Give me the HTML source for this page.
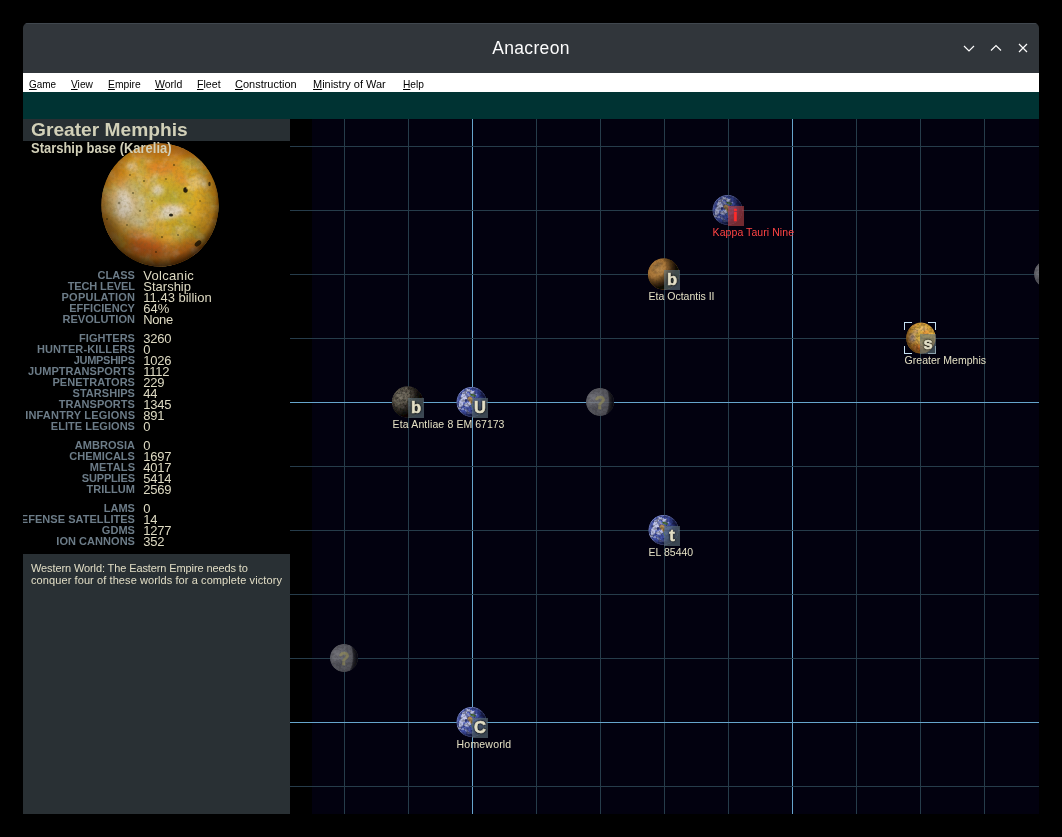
<!DOCTYPE html>
<html><head><meta charset="utf-8"><title>Anacreon</title><style>
*{box-sizing:border-box}
html,body{margin:0;padding:0;background:#000;}
body{width:1062px;height:837px;position:relative;overflow:hidden;font-family:"Liberation Sans",sans-serif;}
.abs{position:absolute}
#win{will-change:transform;position:absolute;left:23px;top:23px;width:1016px;height:791px;overflow:hidden;border-radius:5px 5px 0 0;background:#000}
#tb{position:absolute;left:0;top:0;width:1016px;height:50px;background:#31363b;border-top:1px solid #40474e}
#title{position:absolute;left:0;top:12px;width:1016px;text-align:center;color:#fcfcfc;font-size:17.5px;letter-spacing:.35px;line-height:24px}
#menu{position:absolute;left:0;top:50px;width:1016px;height:19px;background:#fff;color:#000;font-size:10.5px;line-height:19px}
#menu span{position:absolute;top:2px;white-space:nowrap;transform-origin:0 0}
#menu u{text-decoration:underline;text-underline-offset:1px}
#teal{position:absolute;left:0;top:69px;width:1016px;height:27px;background:#003333}
#left{position:absolute;left:0;top:96px;width:267px;height:695px;background:#000;overflow:hidden}
#hd{position:absolute;left:0;top:0;width:267px;height:22px;background:#282f33}
#hd div{position:absolute;left:7.9px;transform-origin:0 50%;transform:scaleX(1.043);top:0px;font-weight:bold;font-size:18.4px;line-height:22px;color:#d2d0b8;white-space:nowrap}
#sub{position:absolute;left:8px;top:22.1px;transform-origin:0 50%;transform:scaleX(.94);font-weight:bold;font-size:13.8px;line-height:15px;color:#d2d0b8;white-space:nowrap;z-index:3}
.lb{position:absolute;right:155px;letter-spacing:.04px;font-weight:bold;font-size:11px;line-height:11px;color:#6c7c88;white-space:nowrap;text-align:right}
.vl{position:absolute;left:120.3px;font-size:13px;line-height:14px;height:14px;overflow:hidden;color:#dedac2;white-space:nowrap}
#msg{position:absolute;left:0;top:435px;width:267px;height:260px;background:#293034;color:#e0dcc4;font-size:11px;line-height:12px;letter-spacing:.09px}
#msg div{position:absolute;left:8px;top:8px;white-space:nowrap}
#map{position:absolute;left:267px;top:96px;width:749px;height:695px;background:#000;overflow:hidden}
#sky{position:absolute;left:22px;top:0;width:727px;height:695px;background:#02010f}
.pl{position:absolute;white-space:nowrap;font-size:10.5px;line-height:12px;color:#e4e0c4}
.bd{position:absolute;width:16px;height:20px;background:rgba(99,119,127,.6);color:#e3dfc6;font-weight:bold;font-size:16.5px;line-height:18.6px;text-align:center;-webkit-text-stroke:.55px #e3dfc6;text-shadow:0 0 1px #000,0 0 2px #000,0 0 3px rgba(0,0,0,.85)}
.bd.en{background:rgba(190,70,70,.6);color:#ff2a2a;-webkit-text-stroke:.55px #ff2a2a;text-shadow:none}
</style></head><body>
<svg width="0" height="0" style="position:absolute"><defs><radialGradient id="shS" cx=".30" cy=".36" r=".78"><stop offset="0" stop-color="#000" stop-opacity="0"/><stop offset=".55" stop-color="#000008" stop-opacity="0"/><stop offset=".8" stop-color="#000008" stop-opacity=".62"/><stop offset="1" stop-color="#000008" stop-opacity=".97"/></radialGradient><filter id="b1" x="-30%" y="-30%" width="160%" height="160%"><feGaussianBlur stdDeviation=".8"/></filter><filter id="b05" x="-30%" y="-30%" width="160%" height="160%"><feGaussianBlur stdDeviation=".45"/></filter><filter id="b2" x="-30%" y="-30%" width="160%" height="160%"><feGaussianBlur stdDeviation="2"/></filter><filter id="b4" x="-30%" y="-30%" width="160%" height="160%"><feGaussianBlur stdDeviation="4"/></filter><filter id="b7" x="-30%" y="-30%" width="160%" height="160%"><feGaussianBlur stdDeviation="7"/></filter><filter id="edge" x="-10%" y="-10%" width="120%" height="120%"><feGaussianBlur stdDeviation=".5"/></filter><filter id="grain" x="0" y="0" width="100%" height="100%"><feTurbulence type="fractalNoise" baseFrequency=".42" numOctaves="2" seed="5"/><feColorMatrix type="matrix" values="0 0 0 0 0  0 0 0 0 0  0 0 0 0 0  3.2 0 0 0 -1.25"/></filter><filter id="grainL" x="0" y="0" width="100%" height="100%"><feTurbulence type="fractalNoise" baseFrequency=".38" numOctaves="2" seed="11"/><feColorMatrix type="matrix" values="0 0 0 0 1  0 0 0 0 .96  0 0 0 0 .86  0 3.0 0 0 -1.45"/></filter><filter id="cloud" x="-20%" y="-20%" width="140%" height="140%"><feGaussianBlur in="SourceGraphic" stdDeviation=".55" result="b"/><feTurbulence type="fractalNoise" baseFrequency=".22" numOctaves="2" seed="9" result="n"/><feDisplacementMap in="b" in2="n" scale="5" xChannelSelector="R" yChannelSelector="G"/><feGaussianBlur stdDeviation=".35"/></filter><clipPath id="c157"><circle cx="0" cy="0" r="15.7"/></clipPath><clipPath id="c15"><circle cx="0" cy="0" r="14.95"/></clipPath><clipPath id="c14"><circle cx="0" cy="0" r="14"/></clipPath><radialGradient id="gE" cx=".34" cy=".42" r=".66"><stop offset="0" stop-color="#6c7ac6"/><stop offset=".5" stop-color="#4656ac"/><stop offset="1" stop-color="#2c3890"/></radialGradient><radialGradient id="shE" cx=".26" cy=".36" r=".84"><stop offset="0" stop-color="#000" stop-opacity="0"/><stop offset=".52" stop-color="#000010" stop-opacity="0"/><stop offset=".74" stop-color="#000010" stop-opacity=".55"/><stop offset=".9" stop-color="#000010" stop-opacity=".9"/><stop offset="1" stop-color="#000010" stop-opacity=".98"/></radialGradient><g id="earth"><g filter="url(#edge)"><g clip-path="url(#c15)"><circle r="15.4" fill="url(#gE)"/><circle r="14.7" fill="none" stroke="#a8b4ea" stroke-width="1.2" opacity=".55" filter="url(#b05)"/><g filter="url(#cloud)" fill="#f0f0fc" opacity=".74"><ellipse cx="-8" cy="-4" rx="3.4" ry="3.6" opacity=".9"/><ellipse cx="-6" cy="-9.5" rx="4.5" ry="1.6" opacity=".75" transform="rotate(-28 -6 -9.5)"/><ellipse cx="-10.5" cy="1.5" rx="2.2" ry="3.2" opacity=".85"/><ellipse cx="-4.5" cy="2.5" rx="3.2" ry="2.2" opacity=".85"/><ellipse cx="0" cy="-10.5" rx="3.4" ry="1.5" opacity=".9"/><ellipse cx="-12" cy="5.5" rx="2.4" ry="1.1" opacity=".9" transform="rotate(32 -12 5.5)"/><ellipse cx="-6" cy="8" rx="4.5" ry="1.1" opacity=".5" transform="rotate(22 -6 8)"/><ellipse cx="-2" cy="11" rx="4" ry="1" opacity=".35" transform="rotate(12 -2 11)"/><ellipse cx="4.5" cy="-7.5" rx="2.4" ry="1.1" opacity=".6"/><ellipse cx="-3" cy="-6.5" rx="1.6" ry="1.2" opacity=".8"/></g><g filter="url(#b05)"><path d="M-3.6 -4.8 C-1.6 -6 .6 -5.4 1.2 -3.4 C1.6 -1.2 1.4 1 .4 2.6 C-.6 1.2 -2 -.6 -3.2 -1.6 C-4.4 -2.8 -4.4 -4 -3.6 -4.8Z" fill="#b08c58"/><path d="M-1.4 -8 C.8 -9 3.6 -7.8 4.8 -5.8 C3.2 -4.8 1.4 -5.4 0 -6 C-1 -6.6 -1.8 -7.2 -1.4 -8Z" fill="#4e7242"/><path d="M.4 2 C1.6 3.2 1.9 4.8 1.3 6.2 C.2 5.2 -.6 3.6 .4 2Z" fill="#587c46"/><ellipse cx="-5.6" cy="-1.6" rx="1.1" ry="1.3" fill="#202a78" opacity=".85"/><ellipse cx="-7.6" cy="4.6" rx="1.2" ry=".8" fill="#2a348a" opacity=".7"/></g><rect x="-16" y="-16" width="32" height="32" filter="url(#grain)" opacity=".35"/><circle r="15.4" fill="url(#shE)"/></g></g></g><radialGradient id="gM" cx=".36" cy=".38" r=".66"><stop offset="0" stop-color="#b48448"/><stop offset=".62" stop-color="#a47032"/><stop offset=".86" stop-color="#c88226"/><stop offset="1" stop-color="#e89c28"/></radialGradient><radialGradient id="shM" cx=".24" cy=".28" r=".86"><stop offset="0" stop-color="#000" stop-opacity="0"/><stop offset=".36" stop-color="#000" stop-opacity="0"/><stop offset=".6" stop-color="#040200" stop-opacity=".6"/><stop offset=".76" stop-color="#040200" stop-opacity=".93"/><stop offset="1" stop-color="#040200" stop-opacity=".99"/></radialGradient><g id="mars"><g filter="url(#edge)"><g clip-path="url(#c157)"><circle r="15.9" fill="url(#gM)"/><g filter="url(#b1)"><ellipse cx="-6" cy="-8.5" rx="5.5" ry="1.2" fill="#6a5638" opacity=".7" transform="rotate(-30 -6 -8.5)"/><ellipse cx="-8.5" cy="-3" rx="3" ry=".9" fill="#74542c" opacity=".6" transform="rotate(38 -8.5 -3)"/><ellipse cx="-2" cy="3.5" rx="4" ry="2.5" fill="#86602e" opacity=".5"/><ellipse cx="-4" cy="-3.5" rx="4" ry="3" fill="#c49456" opacity=".35"/></g><rect x="-16" y="-16" width="32" height="32" filter="url(#grain)" opacity=".12"/><circle r="15.9" fill="url(#shM)"/></g></g></g><radialGradient id="gQ" cx=".34" cy=".34" r=".68"><stop offset="0" stop-color="#6a6458"/><stop offset=".6" stop-color="#534d43"/><stop offset="1" stop-color="#433d33"/></radialGradient><g id="merc"><g filter="url(#edge)"><g clip-path="url(#c157)"><circle r="15.9" fill="url(#gQ)"/><g filter="url(#b1)"><ellipse cx="-6" cy="-6" rx="4" ry="3" fill="#8a8476" opacity=".4"/><ellipse cx="-3" cy="3" rx="4" ry="2.5" fill="#3e3830" opacity=".5"/><ellipse cx="-9" cy="3" rx="2.5" ry="3" fill="#6a6458" opacity=".5"/></g><rect x="-16" y="-16" width="32" height="32" filter="url(#grain)" opacity=".4"/><rect x="-16" y="-16" width="32" height="32" filter="url(#grainL)" opacity=".16"/><circle r="15.9" fill="url(#shM)"/></g></g></g><radialGradient id="gU" cx=".34" cy=".40" r=".66"><stop offset="0" stop-color="#7a7a80"/><stop offset=".6" stop-color="#626268"/><stop offset="1" stop-color="#54545a"/></radialGradient><radialGradient id="shU" cx="-.35" cy=".46" r="1.32"><stop offset="0" stop-color="#000" stop-opacity="0"/><stop offset=".865" stop-color="#000" stop-opacity="0"/><stop offset=".905" stop-color="#06060a" stop-opacity=".62"/><stop offset=".96" stop-color="#06060a" stop-opacity=".8"/><stop offset="1" stop-color="#06060a" stop-opacity=".92"/></radialGradient><g id="unk"><g filter="url(#edge)" opacity=".9"><g clip-path="url(#c14)"><circle r="14.2" fill="url(#gU)"/><g filter="url(#b1)"><ellipse cx="-7" cy="-5" rx="4" ry="3" fill="#8c8c92" opacity=".4"/><ellipse cx="-5" cy="6" rx="5" ry="2.5" fill="#48484e" opacity=".5"/><ellipse cx="-9.5" cy="0" rx="2" ry="3" fill="#84848a" opacity=".4"/></g><rect x="-15" y="-15" width="30" height="30" filter="url(#grain)" opacity=".12"/><circle r="14.2" fill="url(#shU)"/></g></g><text x="0" y="6.6" text-anchor="middle" font-family="Liberation Sans, sans-serif" font-weight="bold" font-size="17.5" fill="#aaa052" stroke="#aaa052" stroke-width=".5" opacity=".45">?</text></g><radialGradient id="gI" cx=".50" cy=".46" r=".56"><stop offset="0" stop-color="#dabb40"/><stop offset=".5" stop-color="#d8ae36"/><stop offset=".8" stop-color="#d09428"/><stop offset="1" stop-color="#a86418"/></radialGradient><radialGradient id="shI" cx=".47" cy=".43" r=".58"><stop offset="0" stop-color="#000" stop-opacity="0"/><stop offset=".62" stop-color="#000" stop-opacity="0"/><stop offset=".86" stop-color="#2a1400" stop-opacity=".3"/><stop offset="1" stop-color="#1a0c00" stop-opacity=".86"/></radialGradient><linearGradient id="shI2" x1="0" y1="1" x2=".75" y2=".2"><stop offset="0" stop-color="#140a00" stop-opacity=".62"/><stop offset=".22" stop-color="#140a00" stop-opacity=".34"/><stop offset=".5" stop-color="#140a00" stop-opacity=".1"/><stop offset="1" stop-color="#140a00" stop-opacity=".04"/></linearGradient><clipPath id="cIo"><ellipse cx="0" cy="0" rx="58.6" ry="61.4"/></clipPath><filter id="edgeB" x="-5%" y="-5%" width="110%" height="110%" color-interpolation-filters="sRGB"><feGaussianBlur stdDeviation=".45"/><feColorMatrix type="saturate" values="1.12"/></filter><filter id="noise" x="0" y="0" width="100%" height="100%"><feTurbulence type="fractalNoise" baseFrequency=".05" numOctaves="4" seed="7"/><feColorMatrix type="matrix" values="0 0 0 0 .90  0 0 0 0 .46  0 0 0 0 .14  2.6 0 0 0 -1.1"/></filter><filter id="noise2" x="0" y="0" width="100%" height="100%"><feTurbulence type="fractalNoise" baseFrequency=".07" numOctaves="4" seed="23"/><feColorMatrix type="matrix" values="0 0 0 0 .96  0 0 0 0 .93  0 0 0 0 .88  0 3.4 0 0 -1.75"/></filter><filter id="noise3" x="0" y="0" width="100%" height="100%"><feTurbulence type="fractalNoise" baseFrequency=".085" numOctaves="3" seed="41"/><feColorMatrix type="matrix" values="0 0 0 0 .52  0 0 0 0 .52  0 0 0 0 .14  0 0 3.2 0 -1.4"/></filter><filter id="noise4" x="0" y="0" width="100%" height="100%"><feTurbulence type="fractalNoise" baseFrequency=".32" numOctaves="2" seed="3"/><feColorMatrix type="matrix" values="0 0 0 0 .25  0 0 0 0 .18  0 0 0 0 .05  3.4 0 0 0 -1.5"/></filter><g id="io"><g filter="url(#edgeB)"><g clip-path="url(#cIo)"><ellipse rx="59" ry="62" fill="url(#gI)"/><rect x="-60" y="-63" width="120" height="126" filter="url(#noise3)" opacity=".6"/><rect x="-60" y="-63" width="120" height="126" filter="url(#noise)" opacity=".5"/><g filter="url(#b4)"><ellipse cx="-14" cy="42" rx="18" ry="10" fill="#d8602a" opacity=".75"/><ellipse cx="-26" cy="30" rx="9" ry="6" fill="#dc6c2c" opacity=".55"/><ellipse cx="30" cy="44" rx="12" ry="6" fill="#e0702a" opacity=".6"/><ellipse cx="8" cy="49" rx="22" ry="8" fill="#dc6c2c" opacity=".55"/><ellipse cx="2" cy="-38" rx="17" ry="7" fill="#e07428" opacity=".65"/><ellipse cx="22" cy="-27" rx="7" ry="6" fill="#e07a30" opacity=".6"/><ellipse cx="-40" cy="-26" rx="7" ry="10" fill="#dc8428" opacity=".6"/><ellipse cx="46" cy="12" rx="8" ry="22" fill="#e2a42e" opacity=".6"/><ellipse cx="12" cy="-10" rx="16" ry="9" fill="#b8ac3c" opacity=".6"/><ellipse cx="26" cy="22" rx="14" ry="9" fill="#b4a83a" opacity=".55"/><ellipse cx="-24" cy="-18" rx="9" ry="7" fill="#c0ae40" opacity=".5"/><ellipse cx="-48" cy="24" rx="6" ry="12" fill="#b47c2c" opacity=".5"/></g><g filter="url(#b7)"><ellipse cx="-34" cy="-1" rx="19" ry="22" fill="#dcd4c6" opacity=".62"/><ellipse cx="-18" cy="12" rx="14" ry="10" fill="#dcd6c0" opacity=".4"/><ellipse cx="38" cy="-2" rx="13" ry="28" fill="#e4b630" opacity=".5"/></g><g filter="url(#b2)" fill="#f0e8e0"><ellipse cx="-35" cy="2" rx="8" ry="9" opacity=".6"/><ellipse cx="-38" cy="-8" rx="5" ry="4" opacity=".5"/><ellipse cx="-2" cy="-15" rx="6" ry="5.5" opacity=".75"/><ellipse cx="12" cy="6" rx="11" ry="6.5" opacity=".85"/><ellipse cx="2" cy="12" rx="6" ry="4" opacity=".6"/><ellipse cx="-22" cy="18" rx="8" ry="4" opacity=".45"/><ellipse cx="-30" cy="-39" rx="3.5" ry="3.5" opacity=".8"/><ellipse cx="-12" cy="-44" rx="4" ry="2" opacity=".45"/><ellipse cx="44" cy="-22" rx="3" ry="8" opacity=".5" transform="rotate(-22 44 -22)"/><ellipse cx="-14" cy="30" rx="5" ry="2.5" opacity=".4"/></g><rect x="-60" y="-63" width="120" height="126" filter="url(#noise2)" opacity=".32"/><rect x="-60" y="-63" width="120" height="126" filter="url(#noise4)" opacity=".22"/><g filter="url(#b4)"><ellipse cx="6" cy="-56" rx="36" ry="10" fill="#b06a14" opacity=".85"/><ellipse cx="-44" cy="-36" rx="7" ry="16" fill="#b87418" opacity=".5" transform="rotate(38 -44 -36)"/><ellipse cx="-50" cy="30" rx="7" ry="20" fill="#9c6418" opacity=".45" transform="rotate(-20 -50 30)"/></g><g filter="url(#b05)" fill="#1a1408"><ellipse cx="25.5" cy="-15" rx="2.2" ry="2.8" opacity=".95"/><ellipse cx="11" cy="10" rx="2" ry="1.6" opacity=".9"/><ellipse cx="38" cy="38.5" rx="3.8" ry="2.3" opacity=".9" transform="rotate(-38 38 38.5)"/><ellipse cx="49.5" cy="-21" rx="1.2" ry="2.2" opacity=".75"/><circle cx="-27" cy="-12" r="1.1" opacity=".45"/><circle cx="-41" cy="-2" r="1.3" opacity=".35"/><circle cx="-16" cy="-24" r="1" opacity=".5"/><circle cx="14" cy="-40" r="1" opacity=".5"/><circle cx="2" cy="32" r="1" opacity=".5"/><circle cx="-4" cy="47" r="1.1" opacity=".5"/><circle cx="30" cy="8" r="1.3" opacity=".35"/><circle cx="-53" cy="14" r="1" opacity=".5"/><circle cx="-20" cy="6" r=".9" opacity=".45"/><circle cx="35" cy="22" r="1" opacity=".4"/><circle cx="-33" cy="20" r="1" opacity=".4"/><circle cx="18" cy="30" r="1" opacity=".45"/><circle cx="-8" cy="-4" r=".9" opacity=".4"/><circle cx="40" cy="-4" r="1" opacity=".4"/><circle cx="-30" cy="-30" r="1" opacity=".4"/><circle cx="6" cy="-26" r="1" opacity=".4"/></g><ellipse cx="28.5" cy="-17.5" rx="2.4" ry="1.6" fill="#f0d070" opacity=".85" filter="url(#b05)" transform="rotate(-30 28.5 -17.5)"/><ellipse rx="59" ry="62" fill="url(#shI)"/><ellipse rx="59" ry="62" fill="url(#shI2)"/></g></g></g><radialGradient id="gIs" cx=".58" cy=".36" r=".66"><stop offset="0" stop-color="#dcb444"/><stop offset=".55" stop-color="#cc9a34"/><stop offset=".88" stop-color="#d48826"/><stop offset="1" stop-color="#e08a1c"/></radialGradient><radialGradient id="shIs" cx=".72" cy=".30" r=".92"><stop offset="0" stop-color="#000" stop-opacity="0"/><stop offset=".48" stop-color="#000" stop-opacity="0"/><stop offset=".75" stop-color="#14100c" stop-opacity=".42"/><stop offset="1" stop-color="#0a0806" stop-opacity=".8"/></radialGradient><filter id="grainO" x="0" y="0" width="100%" height="100%"><feTurbulence type="fractalNoise" baseFrequency=".3" numOctaves="2" seed="17"/><feColorMatrix type="matrix" values="0 0 0 0 .92  0 0 0 0 .42  0 0 0 0 .1  0 3.2 0 0 -1.3"/></filter><clipPath id="cIs"><ellipse cx="0" cy="0" rx="14.7" ry="15.5"/></clipPath><g id="ios"><g filter="url(#edge)"><g clip-path="url(#cIs)"><ellipse rx="15" ry="15.8" fill="url(#gIs)"/><g filter="url(#b1)"><ellipse cx="-8.5" cy="0" rx="3.2" ry="5" fill="#a898a0" opacity=".75"/><ellipse cx="-5" cy="-7" rx="2.5" ry="2" fill="#b8a8b0" opacity=".6"/><ellipse cx="2" cy="-9.5" rx="4" ry="1.8" fill="#f4dca8" opacity=".7"/><ellipse cx="-3" cy="9.5" rx="5" ry="3" fill="#d86c28" opacity=".75"/><ellipse cx="5" cy="-5.5" rx="3.5" ry="2.2" fill="#ec8c28" opacity=".7"/><ellipse cx="-2.5" cy="-1.5" rx="3" ry="3" fill="#b8a83c" opacity=".6"/><ellipse cx="10" cy="-3.5" rx="3" ry="3" fill="#f4c040" opacity=".7"/><ellipse cx="-1" cy="3.5" rx="2.5" ry="2" fill="#e8d090" opacity=".5"/></g><rect x="-16" y="-16" width="32" height="32" filter="url(#grainO)" opacity=".5"/><rect x="-16" y="-16" width="32" height="32" filter="url(#grain)" opacity=".25"/><ellipse rx="15" ry="15.8" fill="url(#shIs)"/></g></g></g></defs></svg>
<div id="win">
<div id="tb"><div id="title">Anacreon</div>
<svg class="abs" style="left:0;top:-1px" width="1016" height="50" viewBox="23 23 1016 50" fill="none" stroke="#fcfcfc" stroke-width="1.2"><path d="M964 46 L969 51 L974 46"/><path d="M991 50.5 L996 45.5 L1001 50.5"/><path d="M1019 44 L1027 52 M1027 44 L1019 52"/></svg>
</div>
<div id="menu">
<span style="left:5.5px;transform:scaleX(0.946)"><u>G</u>ame</span>
<span style="left:47.6px;transform:scaleX(0.970)"><u>V</u>iew</span>
<span style="left:84.5px;transform:scaleX(0.980)"><u>E</u>mpire</span>
<span style="left:132.0px;transform:scaleX(1.000)"><u>W</u>orld</span>
<span style="left:173.5px;transform:scaleX(1.010)"><u>F</u>leet</span>
<span style="left:212.3px;transform:scaleX(1.046)"><u>C</u>onstruction</span>
<span style="left:290.4px;transform:scaleX(1.045)"><u>M</u>inistry of War</span>
<span style="left:379.5px;transform:scaleX(0.970)"><u>H</u>elp</span>
</div>
<div id="teal"></div>
<div id="left">
<div id="hd"><div>Greater Memphis</div></div>
<svg class="abs" style="left:75px;top:22px;z-index:1" width="124" height="128" viewBox="-62 -64 124 128"><use href="#io"/></svg>
<div id="sub">Starship base (Karelia)</div>
<div class="lb" style="top:151px">CLASS</div><div class="vl" style="top:150px;letter-spacing:.3px">Volcanic</div>
<div class="lb" style="top:162px;letter-spacing:-0.13px;margin-right:0.13px">TECH LEVEL</div><div class="vl" style="top:161px">Starship</div>
<div class="lb" style="top:173px;letter-spacing:0.24px;margin-right:-0.24px">POPULATION</div><div class="vl" style="top:172px">11.43 billion</div>
<div class="lb" style="top:184px">EFFICIENCY</div><div class="vl" style="top:183px">64%</div>
<div class="lb" style="top:195px">REVOLUTION</div><div class="vl" style="top:194px;letter-spacing:-.4px">None</div>
<div class="lb" style="top:214px">FIGHTERS</div><div class="vl" style="top:213px;letter-spacing:-.23px">3260</div>
<div class="lb" style="top:225px;letter-spacing:0.12px;margin-right:-0.12px">HUNTER-KILLERS</div><div class="vl" style="top:224px;letter-spacing:-.23px">0</div>
<div class="lb" style="top:236px;letter-spacing:-0.28px;margin-right:0.28px">JUMPSHIPS</div><div class="vl" style="top:235px;letter-spacing:-.23px">1026</div>
<div class="lb" style="top:247px">JUMPTRANSPORTS</div><div class="vl" style="top:246px;letter-spacing:-.23px">1112</div>
<div class="lb" style="top:258px">PENETRATORS</div><div class="vl" style="top:257px;letter-spacing:-.23px">229</div>
<div class="lb" style="top:269px">STARSHIPS</div><div class="vl" style="top:268px;letter-spacing:-.23px">44</div>
<div class="lb" style="top:280px">TRANSPORTS</div><div class="vl" style="top:279px;letter-spacing:-.23px">1345</div>
<div class="lb" style="top:291px;letter-spacing:0.19px;margin-right:-0.19px">INFANTRY LEGIONS</div><div class="vl" style="top:290px;letter-spacing:-.23px">891</div>
<div class="lb" style="top:302px">ELITE LEGIONS</div><div class="vl" style="top:301px;letter-spacing:-.23px">0</div>
<div class="lb" style="top:321px">AMBROSIA</div><div class="vl" style="top:320px;letter-spacing:-.23px">0</div>
<div class="lb" style="top:332px">CHEMICALS</div><div class="vl" style="top:331px;letter-spacing:-.23px">1697</div>
<div class="lb" style="top:343px;letter-spacing:0.16px;margin-right:-0.16px">METALS</div><div class="vl" style="top:342px;letter-spacing:-.23px">4017</div>
<div class="lb" style="top:354px;letter-spacing:-0.17px;margin-right:0.17px">SUPPLIES</div><div class="vl" style="top:353px;letter-spacing:-.23px">5414</div>
<div class="lb" style="top:365px">TRILLUM</div><div class="vl" style="top:364px;letter-spacing:-.23px">2569</div>
<div class="lb" style="top:384px">LAMS</div><div class="vl" style="top:383px;letter-spacing:-.23px">0</div>
<div class="lb" style="top:395px">DEFENSE SATELLITES</div><div class="vl" style="top:394px;letter-spacing:-.23px">14</div>
<div class="lb" style="top:406px">GDMS</div><div class="vl" style="top:405px;letter-spacing:-.23px">1277</div>
<div class="lb" style="top:417px">ION CANNONS</div><div class="vl" style="top:416px;letter-spacing:-.23px">352</div>
<div id="msg"><div><span style="letter-spacing:-.11px">Western World: The Eastern Empire needs to</span><br>conquer four of these worlds for a complete victory</div></div>
</div>
<div id="map"><div id="sky"></div>
<svg class="abs" style="left:0;top:0" width="749" height="695" viewBox="290 119 749 695" shape-rendering="crispEdges"><rect x="344" y="119" width="1" height="695" fill="#263c4a"/><rect x="408" y="119" width="1" height="695" fill="#263c4a"/><rect x="472" y="119" width="1" height="695" fill="#66a5cc"/><rect x="536" y="119" width="1" height="695" fill="#263c4a"/><rect x="600" y="119" width="1" height="695" fill="#263c4a"/><rect x="664" y="119" width="1" height="695" fill="#263c4a"/><rect x="728" y="119" width="1" height="695" fill="#263c4a"/><rect x="792" y="119" width="1" height="695" fill="#66a5cc"/><rect x="856" y="119" width="1" height="695" fill="#263c4a"/><rect x="920" y="119" width="1" height="695" fill="#263c4a"/><rect x="984" y="119" width="1" height="695" fill="#263c4a"/><rect x="290" y="146" width="749" height="1" fill="#263c4a"/><rect x="290" y="210" width="749" height="1" fill="#263c4a"/><rect x="290" y="274" width="749" height="1" fill="#263c4a"/><rect x="290" y="338" width="749" height="1" fill="#263c4a"/><rect x="290" y="402" width="749" height="1" fill="#66a5cc"/><rect x="290" y="466" width="749" height="1" fill="#263c4a"/><rect x="290" y="530" width="749" height="1" fill="#263c4a"/><rect x="290" y="594" width="749" height="1" fill="#263c4a"/><rect x="290" y="658" width="749" height="1" fill="#263c4a"/><rect x="290" y="722" width="749" height="1" fill="#66a5cc"/><rect x="290" y="786" width="749" height="1" fill="#263c4a"/></svg>
<svg class="abs" style="left:418px;top:71px;overflow:visible;opacity:.8" width="40" height="40" viewBox="-20 -20 40 40"><use href="#earth" x="-0.5" y="0"/></svg>
<div class="bd en" style="left:438px;top:87px"><span style="position:relative;left:-.6px">i</span></div>
<div class="pl" style="left:422.6px;top:107px;letter-spacing:0.07px;color:#ff4444">Kappa Tauri Nine</div>
<svg class="abs" style="left:354px;top:135px;overflow:visible" width="40" height="40" viewBox="-20 -20 40 40"><use href="#mars" x="-0.5" y="0"/></svg>
<div class="bd" style="left:374px;top:151px"><span>b</span></div>
<div class="pl" style="left:358.6px;top:171px;letter-spacing:0.00px;">Eta Octantis II</div>
<svg class="abs" style="left:610px;top:199px;overflow:visible" width="40" height="40" viewBox="-20 -20 40 40"><use href="#ios" x="0.9" y="0"/></svg>
<svg class="abs" style="left:614px;top:203px" width="32" height="32" viewBox="0 0 32 32" fill="none" stroke="#c6e2f4" stroke-width="1" shape-rendering="crispEdges"><path d="M0.5 8V0.5H8 M24 0.5H31.5V8 M31.5 24V31.5H24 M8 31.5H0.5V24"/></svg>
<div class="bd" style="left:630px;top:215px"><span>s</span></div>
<div class="pl" style="left:614.6px;top:235px;letter-spacing:0.02px;">Greater Memphis</div>
<svg class="abs" style="left:98px;top:263px;overflow:visible" width="40" height="40" viewBox="-20 -20 40 40"><use href="#merc" x="-0.5" y="0"/></svg>
<div class="bd" style="left:118px;top:279px"><span>b</span></div>
<div class="pl" style="left:102.6px;top:299px;letter-spacing:0.14px;">Eta Antliae 8</div>
<svg class="abs" style="left:162px;top:263px;overflow:visible" width="40" height="40" viewBox="-20 -20 40 40"><use href="#earth" x="-0.5" y="0"/></svg>
<div class="bd" style="left:182px;top:279px"><span>U</span></div>
<div class="pl" style="left:166.6px;top:299px;letter-spacing:0.00px;">EM 67173</div>
<svg class="abs" style="left:290px;top:263px;overflow:visible" width="40" height="40" viewBox="-20 -20 40 40"><use href="#unk" x="0.0" y="0"/></svg>
<svg class="abs" style="left:354px;top:391px;overflow:visible" width="40" height="40" viewBox="-20 -20 40 40"><use href="#earth" x="-0.5" y="0"/></svg>
<div class="bd" style="left:374px;top:407px"><span>t</span></div>
<div class="pl" style="left:358.6px;top:427px;letter-spacing:0.00px;">EL 85440</div>
<svg class="abs" style="left:34px;top:519px;overflow:visible" width="40" height="40" viewBox="-20 -20 40 40"><use href="#unk" x="0.0" y="0"/></svg>
<svg class="abs" style="left:162px;top:583px;overflow:visible" width="40" height="40" viewBox="-20 -20 40 40"><use href="#earth" x="-0.5" y="0"/></svg>
<div class="bd" style="left:182px;top:599px"><span>C</span></div>
<div class="pl" style="left:166.6px;top:619px;letter-spacing:0.19px;">Homeworld</div>
<svg class="abs" style="left:738px;top:135px;overflow:visible" width="40" height="40" viewBox="-20 -20 40 40"><use href="#unk" x="0.0" y="0"/></svg>
</div>
</div></body></html>
